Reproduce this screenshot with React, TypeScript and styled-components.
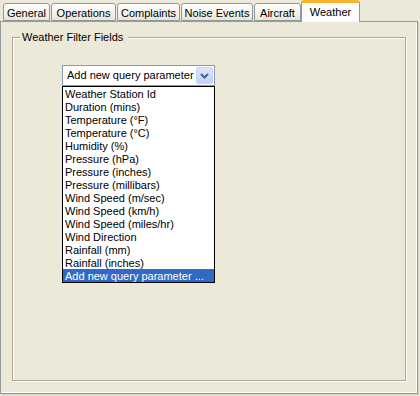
import styled, {createGlobalStyle} from "styled-components";

const GlobalStyle = createGlobalStyle`
    html, body {
        margin: 0;
        padding: 0;
        background: #ece9d8;
    }
    body {
        font-family: "Liberation Sans", Arial, sans-serif;
        font-size: 11px;
        color: #000;
    }
`;

// tab label + the width the tab takes in the strip
const tabs: [string, number][] = [
    ["General", 47],
    ["Operations", 65],
    ["Complaints", 63],
    ["Noise Events", 72],
    ["Aircraft", 47],
    ["Weather", 59],
];

const fields = [
    "Weather Station Id",
    "Duration (mins)",
    "Temperature (°F)",
    "Temperature (°C)",
    "Humidity (%)",
    "Pressure (hPa)",
    "Pressure (inches)",
    "Pressure (millibars)",
    "Wind Speed (m/sec)",
    "Wind Speed (km/h)",
    "Wind Speed (miles/hr)",
    "Wind Direction",
    "Rainfall (mm)",
    "Rainfall (inches)",
    "Add new query parameter ...",
];

export default function App() {
    const active = "Weather";

    return (
        <Window>
            <GlobalStyle/>
            <TabStrip>
                {tabs.map(([t, w]) => (
                    <Tab key={t} $active={t === active} $width={w}>{t}</Tab>
                ))}
            </TabStrip>
            <Panel>
                <GroupBox>
                    <Legend>Weather Filter Fields</Legend>
                    <GroupBody>
                        <Combo>
                            <ComboValue>Add new query parameter</ComboValue>
                            <ComboButton>
                                <svg width="9" height="6" viewBox="0 0 9 6">
                                    <path d="M1 1 L4.5 4.5 L8 1" fill="none" stroke="#4d6185" strokeWidth="2"/>
                                </svg>
                            </ComboButton>
                        </Combo>
                        <DropList>
                            {fields.map((f, i) => (
                                <Option key={f} $selected={i === fields.length - 1}>{f}</Option>
                            ))}
                        </DropList>
                    </GroupBody>
                </GroupBox>
            </Panel>
        </Window>
    );
}

const Window = styled.div`
    width: 420px;
    height: 396px;
    display: flex;
    flex-direction: column;
`;

const TabStrip = styled.div`
    display: flex;
    align-items: flex-end;
    gap: 1px;
    height: 21px;
    padding-left: 3px;
    position: relative;
    z-index: 1;
`;

const Tab = styled.div<{ $active?: boolean; $width: number }>`
    box-sizing: border-box;
    width: ${p => p.$width}px;
    height: ${p => p.$active ? "22px" : "18px"};
    margin-bottom: ${p => p.$active ? "-1px" : "0"};
    margin-left: ${p => p.$active ? "-1px" : "0"};
    padding-top: ${p => p.$active ? "2px" : "2px"};
    text-align: center;
    line-height: 14px;
    border: 1px solid #919b9c;
    border-bottom: ${p => p.$active ? "none" : "1px solid #919b9c"};
    border-top: ${p => p.$active ? "3px solid #f8b331" : "1px solid #919b9c"};
    border-radius: 3px 3px 0 0;
    background: ${p => p.$active ? "#fcfcfe" : "linear-gradient(#fefefe, #f1efe6 70%, #e6e3d6)"};
    white-space: nowrap;
`;

const Panel = styled.div`
    box-sizing: border-box;
    width: 418px;
    height: 373px;
    display: flex;
    flex-direction: column;
    padding: 9px 11px 12px 11px;
    border: 1px solid #919b9c;
    box-shadow: 1px 1px 0 #d2cfbf, inset -1px -1px 0 #fff;
    background: #ece9d8;
`;

const GroupBox = styled.fieldset`
    flex: 1;
    margin: 0;
    padding: 0;
    min-width: 0;
    border: 1px solid #aca899;
    box-shadow: inset 1px 1px 0 #fff, 1px 1px 0 #fff;
    display: flex;
    flex-direction: column;
`;

const Legend = styled.legend`
    margin-left: 7px;
    padding: 0 5px 0 2px;
    line-height: 13px;
    background: #ece9d8;
    color: #000;
`;

const GroupBody = styled.div`
    display: flex;
    flex-direction: column;
    align-items: flex-start;
    padding: 21px 0 0 49px;
`;

const Combo = styled.div`
    box-sizing: border-box;
    width: 153px;
    height: 21px;
    display: flex;
    align-items: center;
    border: 1px solid #7f9db9;
    background: #fff;
    padding: 1px;
`;

const ComboValue = styled.div`
    flex: 1;
    padding-left: 3px;
    line-height: 17px;
    white-space: nowrap;
    overflow: hidden;
`;

const ComboButton = styled.div`
    box-sizing: border-box;
    width: 17px;
    height: 17px;
    display: flex;
    align-items: center;
    justify-content: center;
    border: 1px solid #c3d3fd;
    border-radius: 2px;
    background: linear-gradient(#dbe6fd, #c1d3fb);
`;

const DropList = styled.div`
    box-sizing: border-box;
    width: 153px;
    border: 1px solid #000;
    background: #fff;
    display: flex;
    flex-direction: column;
`;

const Option = styled.div<{ $selected?: boolean }>`
    height: 13px;
    line-height: 14px;
    padding-left: 2px;
    white-space: nowrap;
    background: ${p => p.$selected ? "#316ac5" : "transparent"};
    color: ${p => p.$selected ? "#fff" : "#000"};
`;
